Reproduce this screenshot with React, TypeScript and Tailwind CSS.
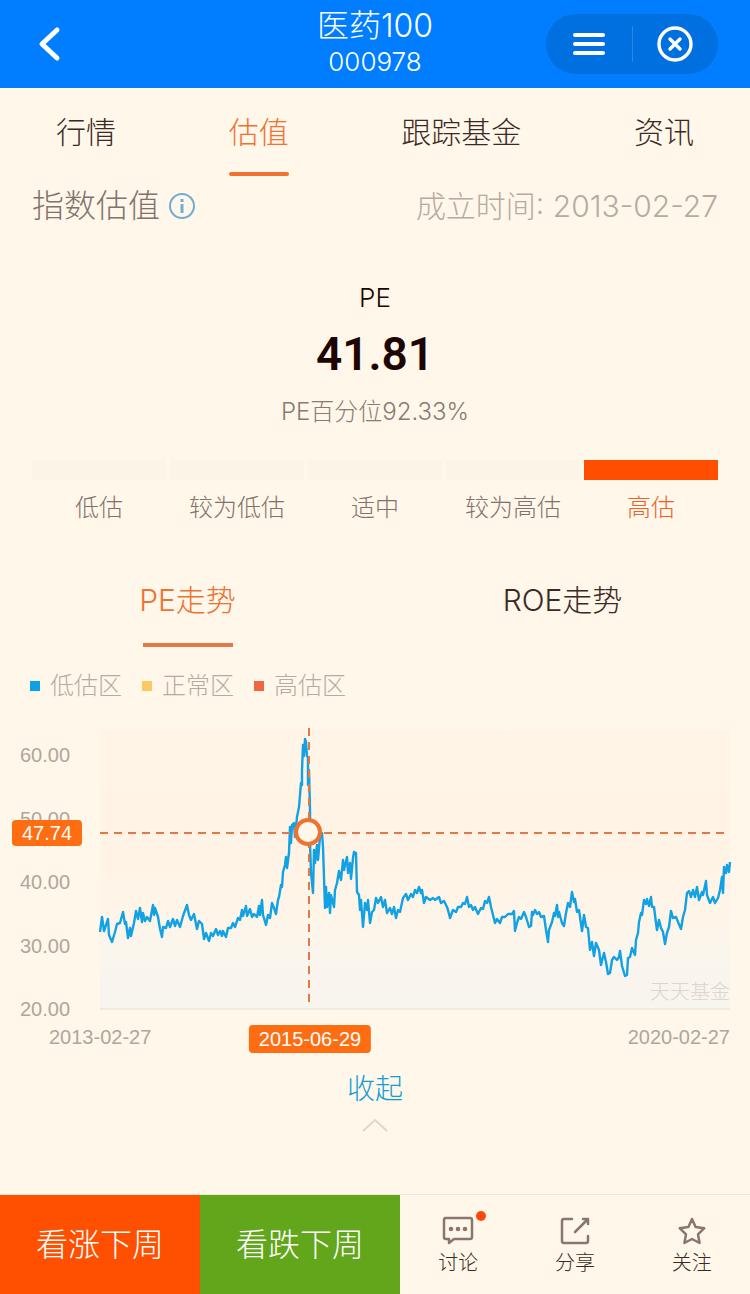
import { useState } from 'react';

const tabs = ['行情', '估值', '跟踪基金', '资讯'];

const levels = ['低估', '较为低估', '适中', '较为高估', '高估'];

const trends = ['PE走势', 'ROE走势'];

const legend = [
  { label: '低估区', color: 'bg-[#0ba0e8]' },
  { label: '正常区', color: 'bg-[#fbc95f]' },
  { label: '高估区', color: 'bg-[#f06543]' },
];

const yTicks = ['60.00', '50.00', '40.00', '30.00', '20.00'];

// PE history, plotted in a 630 x 282 box
const series = [
  '0,204 2,189 4,203 8,191 9,207 12,214 15,204 17,196 20,195 23,184 25,196 26,194 28,210 30,200 31,208 34,195 36,183 38,191 40,180 42,194 43,185 45,193 47,189 50,193',
  '53,177 54,187 55,180 58,189 60,201 62,209 63,199 66,200 68,193 70,199 73,191 75,198 77,192 80,199 83,188 87,177 89,187 91,192 94,186 97,201 99,193 102,196 104,211',
  '106,205 109,213 111,205 113,208 116,201 118,207 120,203 122,208 123,203 126,209 128,200 131,200 133,195 135,199 138,190 140,192 142,182 143,188 146,178 147,188 150,181',
  '152,189 154,186 157,189 159,178 160,187 162,172 163,187 166,197 168,187 170,190 172,175 174,180 176,186 178,172 179,169 181,157 182,159 183,144 185,137 186,129 187,140',
  '189,125 190,99 191,115 192,97 194,95 195,109 197,89 199,79 201,55 202,57 202,42 203,17 204,28 205,11 206,14 207,28 208,29 208,57 209,42 210,82 210,115 211,145 213,165',
  '214,122 215,135 217,117 218,132 220,109 222,105 223,119 225,180 226,159 227,179 229,165 230,185 231,167 234,179 235,162 237,155 239,143 241,152 243,132 244,142 247,129',
  '248,145 250,135 251,151 253,130 254,124 256,125 257,164 259,167 260,182 261,172 263,199 265,175 267,182 268,172 270,195 272,184 274,182 276,170 278,175 281,169 283,179',
  '285,172 287,185 290,180 292,186 294,179 296,190 298,182 300,184 303,170 306,166 308,172 311,166 313,169 315,162 317,165 319,159 321,165 322,162 324,175 326,169 330,172',
  '333,170 335,172 339,169 341,175 344,173 347,179 348,182 350,190 353,182 356,184 358,179 361,179 363,175 365,176 367,169 369,179 371,177 373,182 375,179 378,186 381,180',
  '383,181 385,173 387,175 389,169 391,179 393,187 395,195 397,191 400,195 402,189 405,189 408,186 412,186 414,183 415,203 417,195 419,189 421,191 424,184 426,189 429,199',
  '431,198 432,184 433,187 435,182 437,186 439,184 441,189 444,188 446,202 448,214 449,202 452,194 454,185 455,188 457,177 458,189 459,184 462,195 464,198 466,185 468,175',
  '470,179 472,164 474,174 475,171 477,184 479,182 482,203 484,187 486,199 488,200 490,222 492,214 494,228 496,215 499,222 501,237 504,225 506,234 508,246 510,245 512,232',
  '514,229 517,232 519,229 520,223 522,238 525,248 527,247 528,230 530,229 532,220 535,227 536,212 538,205 539,194 541,185 542,187 544,172 546,176 547,171 549,178 551,169',
  '552,179 554,179 556,195 557,202 559,192 561,200 563,204 565,216 567,205 569,199 571,183 573,190 576,189 578,194 581,201 583,189 585,182 587,165 589,163 591,169 593,162',
  '595,169 597,159 599,172 602,164 603,167 606,153 607,167 610,175 613,169 615,175 618,170 620,162 622,149 623,165 624,139 626,145 627,137 629,144 630,134',
].join(' ');

const DiscussIcon = () => (
  <svg className="w-8 h-8" viewBox="0 0 32 32" fill="none" stroke="currentColor" strokeWidth="2.5" strokeLinejoin="round" strokeLinecap="round">
    <path d="M3 3h25a2 2 0 0 1 2 2v17a2 2 0 0 1-2 2H12l-5 4v-4H4a2 2 0 0 1-2-2V5a2 2 0 0 1 2-2Z" />
    <g fill="currentColor" stroke="none">
      <circle cx="9" cy="14" r="2.3" />
      <circle cx="16" cy="14" r="2.3" />
      <circle cx="23" cy="14" r="2.3" />
    </g>
  </svg>
);

const ShareIcon = () => (
  <svg className="w-8 h-8" viewBox="0 0 32 32" fill="none" stroke="currentColor" strokeWidth="2.5" strokeLinejoin="round" strokeLinecap="round">
    <path d="M13 4H5a2 2 0 0 0-2 2v20a2 2 0 0 0 2 2h22a2 2 0 0 0 2-2v-5" />
    <path d="M16 17 28 5M24 4h5v5" />
  </svg>
);

const StarIcon = () => (
  <svg className="w-8 h-8" viewBox="0 0 32 32" fill="none" stroke="currentColor" strokeWidth="2.5" strokeLinejoin="round">
    <path d="M16 4l3.6 8 8.7 1.2-6.3 6.2 1.6 8.6L16 24l-7.6 4L10 19.4l-6.3-6.2 8.7-1.2Z" />
  </svg>
);

const actions = [
  { label: '讨论', Icon: DiscussIcon, dot: true },
  { label: '分享', Icon: ShareIcon, dot: false },
  { label: '关注', Icon: StarIcon, dot: false },
];

const App = () => {
  const [tab, setTab] = useState('估值');
  const [trend, setTrend] = useState('PE走势');

  return (
    <div className="flex flex-col min-h-screen bg-[#fff7ea] font-['Inter','Noto_Sans_CJK_SC',sans-serif] font-light">
      {/* Header */}
      <header className="grid grid-cols-[1fr_auto_1fr] items-center h-22 px-8 bg-[#007eff] text-white">
        <button aria-label="返回" className="justify-self-start">
          <svg className="w-8 h-9" viewBox="0 0 32 36" fill="none" stroke="currentColor" strokeWidth="5" strokeLinecap="round" strokeLinejoin="round">
            <path d="M25 4 10 18l15 14" />
          </svg>
        </button>
        <div className="text-center pb-1">
          <h1 className="text-[32px] leading-10">医药100</h1>
          <p className="text-[26px] leading-8">000978</p>
        </div>
        <div className="justify-self-end flex items-center h-15 w-43 rounded-full bg-[#006fe0]">
          <button aria-label="菜单" className="flex-1 flex justify-center">
            <svg className="w-8 h-6" viewBox="0 0 32 24" stroke="currentColor" strokeWidth="4" strokeLinecap="round">
              <path d="M2 3h28M2 12h28M2 21h28" />
            </svg>
          </button>
          <span className="w-px h-9 bg-[#2b88ea]" />
          <button aria-label="关闭" className="flex-1 flex justify-center">
            <svg className="w-9 h-9" viewBox="0 0 36 36" fill="none" stroke="currentColor" strokeWidth="3.4" strokeLinecap="round">
              <circle cx="18" cy="18" r="16" />
              <path d="m13 13 10 10M23 13 13 23" />
            </svg>
          </button>
        </div>
      </header>

      {/* Tabs */}
      <nav className="flex justify-between px-14">
        {tabs.map((t) => (
          <button key={t} onClick={() => setTab(t)} className={`h-22 flex flex-col items-center text-[30px] leading-22 ${t === tab ? 'text-[#ee7330]' : 'text-[#3b2a24]'}`}>
            {t}
            {t === tab && <span className="-mt-1 w-full h-1 shrink-0 rounded-full bg-[#ee7330]" />}
          </button>
        ))}
      </nav>

      <main>
        {/* Title row */}
        <div className="flex items-center justify-between h-15 px-8">
          <h2 className="flex items-center gap-2 text-[32px] text-[#82726a]">
            指数估值
            <svg className="w-7 h-7 text-[#72acd0]" viewBox="0 0 28 28" fill="none" stroke="currentColor" strokeWidth="2">
              <circle cx="14" cy="14" r="12" />
              <path d="M14 12v9" strokeWidth="3" />
              <path d="M14 7v3" strokeWidth="3" />
            </svg>
          </h2>
          <p className="text-[30px] text-[#b6aba0]">成立时间: 2013-02-27</p>
        </div>

        {/* Current PE */}
        <div className="flex flex-col items-center mt-10 text-[#1c0502]">
          <p className="text-[26px] leading-11">PE</p>
          <p className="text-[46px] leading-17 font-semibold font-['Roboto',sans-serif]">41.81</p>
          <p className="text-2xl leading-12 text-[#8a7a70]">PE百分位92.33%</p>
        </div>

        {/* Valuation levels */}
        <ul className="grid grid-cols-5 gap-1 mt-6 px-8">
          {levels.map((l) => (
            <li key={l} className={`text-center text-2xl leading-14 ${l === '高估' ? 'text-[#f0602a]' : 'text-[#82726a]'}`}>
              <div className={`h-5 ${l === '高估' ? 'bg-[#ff4e00]' : 'bg-[#fcf4e7]'}`} />
              {l}
            </li>
          ))}
        </ul>

        {/* Trend tabs */}
        <div className="grid grid-cols-2 mt-5">
          {trends.map((t) => (
            <button key={t} onClick={() => setTrend(t)} className={`h-23 flex flex-col items-center text-[30px] leading-22 ${t === trend ? 'text-[#ee7330]' : 'text-[#3b2a24]'}`}>
              {t}
              {t === trend && <span className="-mt-px w-[90px] h-1 shrink-0 bg-[#e07848]" />}
            </button>
          ))}
        </div>

        {/* Legend */}
        <ul className="flex gap-5 px-[30px] mt-5 text-2xl leading-9 text-[#b6aba0]">
          {legend.map((l) => (
            <li key={l.label} className="flex items-center gap-[10px]">
              <span className={`w-[10px] h-[10px] ${l.color}`} />
              {l.label}
            </li>
          ))}
        </ul>

        {/* Chart */}
        <section className="mt-6 pr-5 font-['Liberation_Sans','Noto_Sans_CJK_SC',sans-serif] font-normal text-xl leading-6 text-[#b0a69c]">
          <div className="relative grid grid-cols-[100px_1fr] h-[293px]">
            <ul className="flex flex-col justify-between pt-[15px] pl-5">
              {yTicks.map((y) => <li key={y}>{y}</li>)}
            </ul>
            <span className="absolute left-3 top-[92px] w-[70px] h-[26px] rounded-sm bg-[#ff6d12] text-white text-center leading-[26px]">47.74</span>
            <div className="relative h-[282px]">
              <svg className="w-full h-full overflow-visible" viewBox="0 0 630 282" preserveAspectRatio="none" fill="none">
                <defs>
                  <linearGradient id="zones" x1="0" y1="0" x2="0" y2="1">
                    <stop offset="0" stopColor="#fff4e6" />
                    <stop offset="0.45" stopColor="#fff3e5" />
                    <stop offset="0.66" stopColor="#fef5e8" />
                    <stop offset="0.8" stopColor="#faf5ed" />
                    <stop offset="1" stopColor="#f8f4ee" />
                  </linearGradient>
                </defs>
                <rect y="2" width="630" height="279" fill="url(#zones)" />
                <path d="M0 281h630" stroke="#f0eae0" strokeWidth="2" />
                <polyline points={series} stroke="#12a1e3" strokeWidth="2.4" strokeLinejoin="round" />
                <path d="M0 105h626M209 0v274" stroke="#df7a45" strokeWidth="2" strokeDasharray="8 6" />
              </svg>
              <span className="absolute left-[33%] top-[104px] w-7 h-7 -translate-1/2 rounded-full border-4 border-[#ee7330] bg-[#fff7ea]" />
              <span className="absolute right-0 bottom-1 font-light leading-7 text-[#ddd6cd]">天天基金</span>
            </div>
          </div>
          <div className="relative flex justify-between mt-1 ml-[100px]">
            <span className="-ml-[51px]">2013-02-27</span>
            <span className="absolute left-1/3 top-0 -translate-x-1/2 px-[10px] leading-7 rounded-sm bg-[#ff6d12] text-white">2015-06-29</span>
            <span>2020-02-27</span>
          </div>
        </section>

        {/* Collapse */}
        <button className="flex flex-col items-center mx-auto mt-4 text-[28px] leading-12 text-[#109fd4]">
          收起
          <svg className="w-7 h-4 mt-1 text-[#ddd8cf]" viewBox="0 0 28 16" fill="none" stroke="currentColor" strokeWidth="2">
            <path d="M2 14 14 3l12 11" />
          </svg>
        </button>
      </main>

      {/* Bottom bar */}
      <footer className="flex mt-auto h-25 border-t border-[#efe8da]">
        <div className="grid grid-cols-2 w-[400px] text-[32px] text-white">
          <button className="bg-[#ff4f00]">看涨下周</button>
          <button className="bg-[#62a61b]">看跌下周</button>
        </div>
        <div className="flex-1 grid grid-cols-3">
          {actions.map(({ label, Icon, dot }) => (
            <button key={label} className="flex flex-col items-center pt-5 text-xl leading-8 text-[#3b2a24]">
              <span className="relative text-[#8a776c]">
                <Icon />
                {dot && <span className="absolute -right-3 -top-1 w-[10px] h-[10px] rounded-full bg-[#fb4a0c]" />}
              </span>
              {label}
            </button>
          ))}
        </div>
      </footer>
    </div>
  );
};

export default App;
